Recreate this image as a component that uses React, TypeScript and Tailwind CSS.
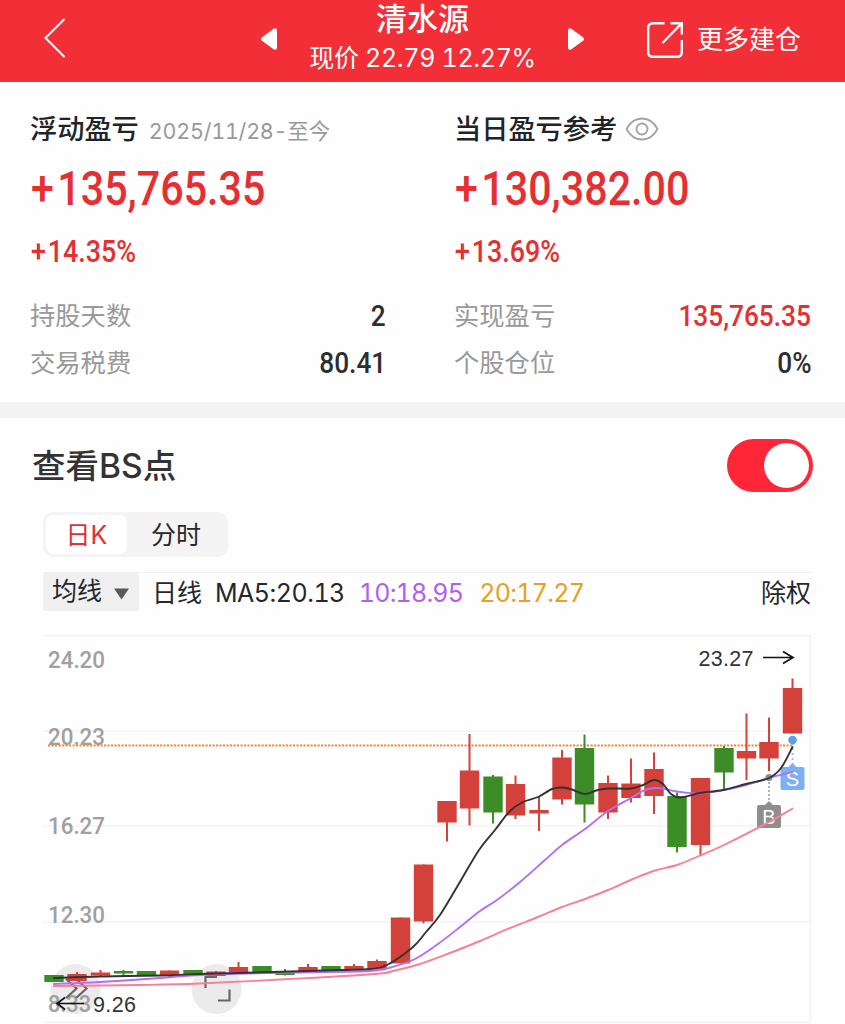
import type { ReactNode } from 'react';

const UP = '#d4413a';
const DOWN = '#3c8c28';

interface Candle {
  x: number;
  top: number;
  bottom: number;
  high: number;
  low: number;
  up: boolean;
}

const rows: [number, number, number, number, number, boolean][] = [
  [54, 975, 982, 975, 982, false],
  [77, 974, 981, 972, 981, true],
  [100.5, 972.5, 975.5, 970, 977, true],
  [123.5, 971, 973.5, 970, 976, false],
  [146.5, 971, 976, 971, 976, false],
  [169.5, 970.5, 975, 970.5, 978, true],
  [193, 970, 975, 970, 975, false],
  [216, 971.5, 976, 971, 978, true],
  [238.5, 967, 972, 962, 972, true],
  [262, 966, 972, 966, 973.5, false],
  [285, 971.5, 975, 969, 975.5, false],
  [308, 967, 971.5, 964, 971.5, true],
  [331, 966, 970, 966, 970, false],
  [354, 966, 970, 964, 970, true],
  [377, 961, 969.5, 959.5, 969.5, true],
  [400.5, 917.5, 963.5, 917.5, 963.5, true],
  [423.5, 864.5, 921.5, 864.5, 923.5, true],
  [447, 801, 822.5, 801, 841.5, true],
  [469.5, 770.5, 808.5, 734, 825.5, true],
  [493, 776.5, 812.5, 775, 823.5, false],
  [515.5, 784, 815.5, 775.5, 819, true],
  [539, 810, 813.5, 796, 831, true],
  [562, 757.5, 799.5, 750, 804.5, true],
  [584.5, 748, 804.5, 734.5, 822.5, false],
  [608, 783, 812.5, 775.5, 819, true],
  [631, 783.5, 798, 758.5, 802.5, true],
  [654, 769, 796, 752.5, 814, true],
  [677, 796, 847, 792.5, 852.5, false],
  [700.5, 778, 845, 778, 855, true],
  [724, 748, 772.5, 746, 789, false],
  [746.5, 751, 758.5, 713.5, 780, true],
  [769, 742, 758.5, 717.5, 771, true],
  [792.5, 688, 733.5, 678.5, 733.5, true],
];

const candles: Candle[] = rows.map(([x, top, bottom, high, low, up]) => ({ x, top, bottom, high, low, up }));

const ma5 = [
  [54, 978], [100, 976.5], [160, 975.5], [200, 974], [290, 971.5], [340, 970], [370, 969], [387, 965], [413, 947],
  [426, 932], [440, 915], [457, 887], [479, 850], [495, 830], [510, 811], [523, 802], [538, 797], [552, 789],
  [562, 787.5], [572, 789.5], [585, 794], [598, 790], [608, 788.5], [631, 788.5], [643, 785], [654, 780],
  [663, 784], [671, 794], [680, 797.5], [700, 793], [723, 790], [746, 784], [769, 778], [781, 768], [792.5, 747],
];

const ma10 = [
  [54, 984], [100, 982], [160, 978], [200, 975], [290, 972.5], [370, 971], [392, 967], [415, 959], [438, 944],
  [460, 927], [480, 911], [497, 900], [520, 882], [545, 860], [562, 845], [585, 829], [608, 811], [631, 798],
  [645, 790], [658, 788], [677, 791.5], [700, 793.5], [724, 790], [746, 785], [769, 778], [792.5, 772],
];

const ma20 = [
  [54, 986], [140, 985], [200, 983.5], [290, 979], [375, 974], [395, 970.5], [420, 964], [450, 953], [480, 941],
  [510, 928], [538, 917], [562, 907], [585, 899], [608, 890], [633, 879], [655, 870.5], [677, 865], [700, 855.5],
  [724, 845], [769, 822], [792.5, 808.5],
];

// Catmull-Rom through the points
function smooth(p: number[][]) {
  let d = `M${p[0][0]} ${p[0][1]}`;
  for (let i = 0; i < p.length - 1; i++) {
    const a = p[i - 1] ?? p[i];
    const b = p[i];
    const c = p[i + 1];
    const e = p[i + 2] ?? c;
    d += `C${b[0] + (c[0] - a[0]) / 6} ${b[1] + (c[1] - a[1]) / 6} ${c[0] - (e[0] - b[0]) / 6} ${c[1] - (e[1] - b[1]) / 6} ${c[0]} ${c[1]}`;
  }
  return d;
}

const axis = [
  { label: '24.20', y: 667.5 },
  { label: '20.23', y: 744.5 },
  { label: '16.27', y: 833.5 },
  { label: '12.30', y: 922.5 },
  { label: '8.33', y: 1012 },
];

function Header() {
  return (
    <header className="flex h-[82px] items-start bg-[#f22e37] text-white">
      <svg className="ml-[43px] mt-[17px] h-[42px] w-6 shrink-0" viewBox="0 0 24 42" fill="none" stroke="currentColor" strokeWidth="2" strokeLinecap="round">
        <path d="M21 2.5 2.5 21 21 39.5" />
      </svg>
      <svg className="ml-[193px] mt-[27px] h-6 w-[18px] shrink-0" viewBox="0 0 18 24" fill="currentColor">
        <path d="M14 1.4 1.9 10.2q-2 1.8 0 3.6L14 22.4q2.8 1 3-2V3.4q-.2-3-3-2Z" />
      </svg>
      <div className="flex w-[289px] shrink-0 flex-col items-center">
        <h1 className="mt-[1px] text-[31px] font-medium leading-[36px]">清水源</h1>
        <p className="mt-[4px] whitespace-nowrap text-[25px] tabular-nums leading-[34px] tracking-[-0.3px]">现价 22.79 12.27%</p>
      </div>
      <svg className="mt-[27px] h-6 w-[18px] shrink-0" viewBox="0 0 18 24" fill="currentColor">
        <path d="m4 1.4 12.1 8.8q2 1.8 0 3.6L4 22.4q-2.8 1-3-2V3.4q.2-3 3-2Z" />
      </svg>
      <svg className="ml-[61px] mt-[21px] h-[38px] w-[38px] shrink-0" viewBox="0 0 38 38" fill="none" stroke="currentColor" strokeWidth="2.4">
        <path d="M18.5 2.2H7Q2.2 2.2 2.2 7v24q0 4.8 4.8 4.8h24q4.8 0 4.8-4.8V19" />
        <path d="M24.5 2.2h11.3v11.3M35.3 2.7 16.5 22" />
      </svg>
      <span className="ml-[13px] mt-[22px] whitespace-nowrap text-[26px] leading-[36px]">更多建仓</span>
    </header>
  );
}

function Row({ label, children, red }: { label: string; children: ReactNode; red?: boolean }) {
  return (
    <div className="flex h-[47px] items-center justify-between">
      <span className="text-[25.3px] text-[#999]">{label}</span>
      <span className={`mt-px origin-right scale-x-[0.89] font-['Roboto'] text-[29.5px] font-medium ${red ? 'text-[#e52f31]' : 'text-[#2b2d30]'}`}>
        {children}
      </span>
    </div>
  );
}

function Amount({ value, percent }: { value: string; percent: string }) {
  return (
    <div className="flex flex-col items-start font-['Roboto'] font-medium text-[#e52f31]">
      <span className="ml-px mt-[9px] origin-left scale-x-[0.85] text-[48.5px] leading-[60px]">
        <span className="mr-[4px]">+</span>{value}
      </span>
      <span className="ml-px mt-[13px] origin-left scale-x-[0.88] text-[30.5px] leading-[40px]">
        <span className="mr-[2px]">+</span>{percent}
      </span>
    </div>
  );
}

function Summary() {
  return (
    <section className="flex h-[320px] pl-[30px] pr-[34px] pt-[28px]">
      <div className="w-[356px]">
        <div className="flex h-10 items-center whitespace-nowrap">
          <h2 className="mt-px text-[27.2px] font-medium text-[#202328]">浮动盈亏</h2>
          <span className="ml-[10px] mt-[3px] text-[21.5px] tabular-nums tracking-[-0.22px] text-[#999]">
            2025/11/28-<span className="tracking-normal">至今</span>
          </span>
        </div>
        <Amount value="135,765.35" percent="14.35%" />
        <div className="mt-[20px]">
          <Row label="持股天数">2</Row>
          <Row label="交易税费">80.41</Row>
        </div>
      </div>
      <div className="ml-[68px] w-[357px]">
        <div className="flex h-10 items-center whitespace-nowrap">
          <h2 className="mt-px text-[27.2px] font-medium text-[#202328]">当日盈亏参考</h2>
          <svg className="-mt-[2px] ml-[8px] h-6 w-[34px]" viewBox="0 0 34 24" fill="none" stroke="#a3a3a3" strokeWidth="1.8">
            <path d="M1.5 12C5.5 4.5 11 1.5 17 1.5S28.5 4.5 32.5 12C28.5 19.5 23 22.5 17 22.5S5.5 19.5 1.5 12Z" />
            <circle cx="17" cy="12" r="5.5" />
          </svg>
        </div>
        <Amount value="130,382.00" percent="13.69%" />
        <div className="mt-[20px]">
          <Row label="实现盈亏" red>135,765.35</Row>
          <Row label="个股仓位">0%</Row>
        </div>
      </div>
    </section>
  );
}

function Toolbar() {
  return (
    <div className="ml-[43px] mt-[15px] flex h-[63px] w-[768px] items-start whitespace-nowrap border-t border-[#f1f1f1] text-[25px] leading-[40px] text-[#25272b]">
      <button className="flex h-[38px] w-[96px] items-center rounded-[3px] bg-[#f0f0f0] pl-[9px] leading-[36px]">
        <span className="-mt-[2px]">均线</span>
        <svg className="ml-[12px] mt-[4px] h-3 w-[15px]" viewBox="0 0 15 12" fill="#595959">
          <path d="M0 .5h15l-7.5 11z" />
        </svg>
      </button>
      <span className="ml-[13px]">日线</span>
      <span className="ml-[13px] tabular-nums tracking-[-0.5px]">MA5:20.13</span>
      <span className="ml-[14px] tabular-nums tracking-[-0.8px] text-[#b060f0]">10:18.95</span>
      <span className="ml-[16px] tabular-nums tracking-[-0.7px] text-[#e8a020]">20:17.27</span>
      <span className="ml-auto">除权</span>
    </div>
  );
}

function Marker({ x, y, letter, color }: { x: number; y: number; letter: string; color: string }) {
  return (
    <g>
      <path d={`M${x - 4} ${y + 3}l4-4 4 4h6q2 0 2 2v19q0 2-2 2h-20q-2 0-2-2v-19q0-2 2-2z`} fill={color} />
      <text x={x} y={y + 21.5} textAnchor="middle" fontSize="20" fill="#fff">{letter}</text>
    </g>
  );
}

function Chart() {
  return (
    <svg className="block h-[389px] w-[845px] font-['Liberation_Sans']" viewBox="0 635 845 389" fill="none">
      <g stroke="#f3f3f3" strokeWidth="1.5">
        <path d="M43 635.5H811M43 731H811M43 826H811M43 922H811M43 1022.5H811M810.5 635V1023" />
      </g>
      <g fill="#dedede" fillOpacity="0.6">
        <circle cx="75.5" cy="989" r="25" />
        <circle cx="216.5" cy="989" r="25" />
      </g>
      <g fontFamily="Roboto" fontSize="24" fontWeight="500" fill="#a0a0a0">
        {axis.map((a) => (
          <text key={a.label} x="48" y={a.y} textLength={a.label.length === 5 ? 57 : 43} lengthAdjust="spacingAndGlyphs">
            {a.label}
          </text>
        ))}
      </g>
      <g stroke="#666" strokeWidth="2.2">
        <path d="M66 979 76.5 988.5 66 998M76 979 86.5 988.5 76 998" />
        <path d="M205.5 988V977H217M229.5 989.5V1000.5H218" />
      </g>
      <path d="M48 745.5H793" stroke="#f08a3c" strokeWidth="2" strokeDasharray="2.2 1.3" />
      {candles.map((c) => (
        <g key={c.x} fill={c.up ? UP : DOWN}>
          <rect x={c.x - 1} y={c.high} width="2" height={c.low - c.high} />
          <rect x={c.x - 9.7} y={c.top} width="19.4" height={c.bottom - c.top} />
        </g>
      ))}
      <path d="M769 782V803" stroke="#999" strokeWidth="1.5" strokeDasharray="2 2" />
      <circle cx="769" cy="777.5" r="3.5" fill="#8c8c8c" />
      <path d="M792.5 743V765" stroke="#8bbcf5" strokeWidth="1.8" strokeDasharray="2 3" />
      <circle cx="792.5" cy="740" r="4.3" fill="#5b9ff0" />
      <Marker x={769} y={802} letter="B" color="#8e8e8e" />
      <Marker x={792.5} y={764} letter="S" color="#7db0f3" />
      <g strokeWidth="1.9" strokeLinecap="round">
        <path d={smooth(ma20)} stroke="#f78095" />
        <path d={smooth(ma10)} stroke="#b070f0" />
        <path d={smooth(ma5)} stroke="#333" />
      </g>
      <g stroke="#111" strokeWidth="1.7">
        <path d="M763 657.5H792M783 651.5 793 657.5 783 663.5" />
        <path d="M57 1003.5H84M65 997.5 57 1003.5 65 1009.5" />
      </g>
      <g fontSize="21.5" fill="#333">
        <text x="698.5" y="665.5" textLength="55">23.27</text>
        <text x="93" y="1011.5" textLength="43">9.26</text>
      </g>
    </svg>
  );
}

export default function App() {
  return (
    <div className="h-[1024px] w-[845px] overflow-hidden bg-[#fefefe] font-['Inter','Noto_Sans_CJK_SC',sans-serif]">
      <Header />
      <Summary />
      <div className="h-4 bg-[#f3f3f3]" />
      <div className="flex h-[94px] items-center justify-between pl-[32px] pr-[32px]">
        <h2 className="mt-[2px] text-[33.5px] font-medium text-[#333]">查看BS点</h2>
        <div className="flex h-[53px] w-[86px] items-center justify-end rounded-full bg-[#ff2638] pr-[4px]">
          <div className="size-[45px] rounded-full bg-white" />
        </div>
      </div>
      <div className="ml-[43px] flex h-[45px] w-[185px] rounded-[10px] bg-[#f4f4f4] p-[3px] text-[25px] leading-[38px]">
        <button className="w-[81px] rounded-lg bg-white text-[#e52f31]">日K</button>
        <button className="w-[98px] text-[#25272b]">分时</button>
      </div>
      <Toolbar />
      <Chart />
    </div>
  );
}
